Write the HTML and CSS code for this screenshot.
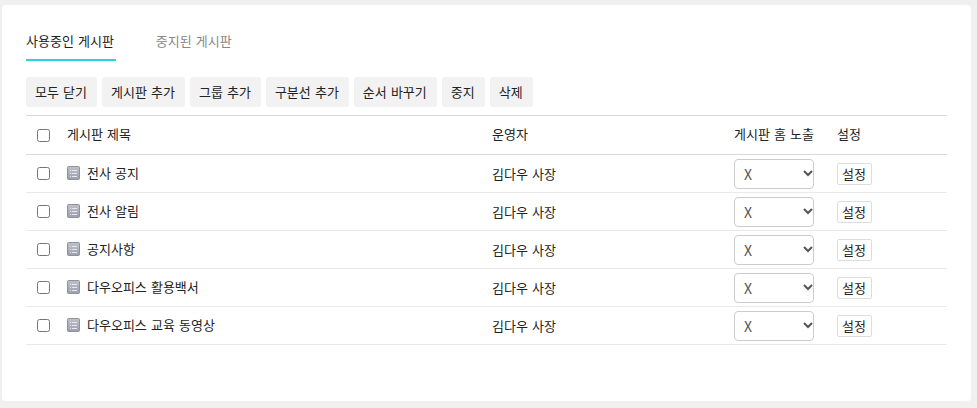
FILE: index.html
```html
<!DOCTYPE html>
<html lang="ko">
<head>
<meta charset="utf-8">
<meta name="viewport" content="width=device-width, initial-scale=1">
<title>게시판 관리</title>
<link rel="stylesheet" href="styles.css">
</head>
<body>
<svg class="sprite" aria-hidden="true">
  <defs>
    <linearGradient id="board-fill" x1="0" y1="0" x2="0" y2="1">
      <stop offset="0" stop-color="#bfc1c9"/>
      <stop offset="1" stop-color="#9c9fae"/>
    </linearGradient>
    <symbol id="board-icon" viewBox="0 0 13 14">
      <rect x=".5" y=".5" width="12" height="13" rx="1" fill="url(#board-fill)" stroke="#8e919e"/>
      <path d="M3 4.500h1M5 4.500h5M3 7.500h1M5 7.500h5M3 10.500h1M5 10.500h5" stroke="#e6e8ee"/>
    </symbol>
  </defs>
</svg>
<main class="card">
  <nav class="tabs">
    <a class="tab active" href="#active">사용중인 게시판</a>
    <a class="tab" href="#stopped">중지된 게시판</a>
  </nav>
  <div class="toolbar">
    <button type="button">모두 닫기</button>
    <button type="button">게시판 추가</button>
    <button type="button">그룹 추가</button>
    <button type="button">구분선 추가</button>
    <button type="button">순서 바꾸기</button>
    <button type="button">중지</button>
    <button type="button">삭제</button>
  </div>
  <table class="boards">
    <colgroup><col class="col-check"><col class="col-title"><col class="col-owner"><col class="col-home"><col class="col-set"></colgroup>
    <thead>
      <tr>
        <th><input type="checkbox" aria-label="전체 선택"></th>
        <th>게시판 제목</th>
        <th>운영자</th>
        <th>게시판 홈 노출</th>
        <th>설정</th>
      </tr>
    </thead>
    <tbody>
      <tr>
        <td><input type="checkbox" id="b1"></td>
        <td><label class="name" for="b1"><svg class="icon" aria-hidden="true"><use href="#board-icon"/></svg>전사 공지</label></td>
        <td class="owner">김다우 사장</td>
        <td><select aria-label="게시판 홈 노출"><option>X</option><option>O</option></select></td>
        <td><button type="button" class="setting">설정</button></td>
      </tr>
      <tr>
        <td><input type="checkbox" id="b2"></td>
        <td><label class="name" for="b2"><svg class="icon" aria-hidden="true"><use href="#board-icon"/></svg>전사 알림</label></td>
        <td class="owner">김다우 사장</td>
        <td><select aria-label="게시판 홈 노출"><option>X</option><option>O</option></select></td>
        <td><button type="button" class="setting">설정</button></td>
      </tr>
      <tr>
        <td><input type="checkbox" id="b3"></td>
        <td><label class="name" for="b3"><svg class="icon" aria-hidden="true"><use href="#board-icon"/></svg>공지사항</label></td>
        <td class="owner">김다우 사장</td>
        <td><select aria-label="게시판 홈 노출"><option>X</option><option>O</option></select></td>
        <td><button type="button" class="setting">설정</button></td>
      </tr>
      <tr>
        <td><input type="checkbox" id="b4"></td>
        <td><label class="name" for="b4"><svg class="icon" aria-hidden="true"><use href="#board-icon"/></svg>다우오피스 활용백서</label></td>
        <td class="owner">김다우 사장</td>
        <td><select aria-label="게시판 홈 노출"><option>X</option><option>O</option></select></td>
        <td><button type="button" class="setting">설정</button></td>
      </tr>
      <tr>
        <td><input type="checkbox" id="b5"></td>
        <td><label class="name" for="b5"><svg class="icon" aria-hidden="true"><use href="#board-icon"/></svg>다우오피스 교육 동영상</label></td>
        <td class="owner">김다우 사장</td>
        <td><select aria-label="게시판 홈 노출"><option>X</option><option>O</option></select></td>
        <td><button type="button" class="setting">설정</button></td>
      </tr>
    </tbody>
  </table>
</main>
</body>
</html>
```

FILE: styles.css
```css
* {
  box-sizing: border-box;
}

body {
  margin: 0;
  padding: 5px 6px 7px 2px;
  background: #f0f0f0;
  color: #222;
  font: 13px/20px "DejaVu Sans", "Noto Sans CJK KR", sans-serif;
}

button,
select {
  font: inherit;
  color: inherit;
}

.sprite {
  position: absolute;
  width: 0;
  height: 0;
}

.card {
  padding: 27px 24px 56px;
  border-radius: 4px;
  background: #fff;
}

.tabs {
  display: flex;
  gap: 40px;
  margin-bottom: 16px;
}

.tab {
  padding: 0 2px 7px 0;
  border-bottom: 2px solid transparent;
  color: #888;
  text-decoration: none;
}

.tab.active {
  border-color: #2fd0e6;
  color: #222;
}

.toolbar {
  display: flex;
  flex-wrap: wrap;
  gap: 5px;
  margin-bottom: 8px;
}

.toolbar button {
  height: 30px;
  padding: 2px 10px 0 9px;
  border: 0;
  border-radius: 3px;
  background: #f2f2f2;
}

.boards {
  width: 100%;
  table-layout: fixed;
  border-collapse: separate;
  border-spacing: 0;
  border-top: 1px solid #d9d9d9;
}

.col-check {
  width: 41px;
}

.col-owner {
  width: 242px;
}

.col-home {
  width: 103px;
}

.col-set {
  width: 110px;
}

th,
td {
  height: 38px;
  padding: 0;
  border-bottom: 1px solid #e9e9e9;
  font-weight: 400;
  text-align: left;
  vertical-align: middle;
}

th {
  height: 39px;
  border-color: #d9d9d9;
}

.owner {
  padding-top: 2px;
}

input[type="checkbox"] {
  display: block;
  width: 13px;
  height: 13px;
  margin: 0 0 0 11px;
}

.name {
  display: flex;
  align-items: center;
  gap: 7px;
}

.icon {
  width: 13px;
  height: 14px;
  margin-bottom: 2px;
}

select {
  display: block;
  width: 80px;
  height: 30px;
  padding: 0 16px 0 9px;
  border: 1px solid #ccc;
  border-radius: 4px;
  appearance: none;
  background: #fff url("data:image/svg+xml,%3Csvg xmlns='http://www.w3.org/2000/svg' width='10' height='7' viewBox='0 0 10 7'%3E%3Cpath d='M1 1l4 4 4-4' fill='none' stroke='%23555' stroke-width='2'/%3E%3C/svg%3E") no-repeat right center;
  color: #555;
  font-size: 14px;
  font-family: "Noto Sans CJK KR", sans-serif;
}

.setting {
  display: block;
  height: 22px;
  padding: 1px 5px 0 4px;
  border: 1px solid #ddd;
  border-radius: 2px;
  background: #fff;
}
```
